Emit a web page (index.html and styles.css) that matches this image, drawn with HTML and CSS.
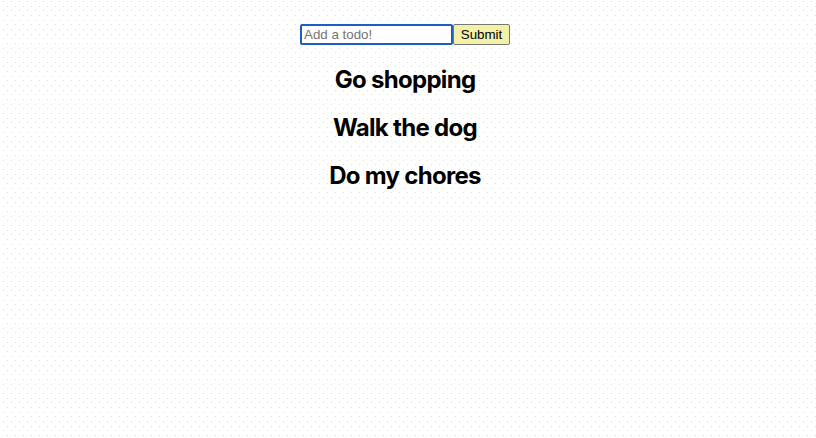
FILE: index.html
```html
<!DOCTYPE html>
<html>
<head>
<meta charset="utf-8">
<link rel="stylesheet" href="styles.css">
</head>
<body>
<div class="app">
  <form class="todo-form">
    <input class="todo-input" type="text" placeholder="Add a todo!">
    <button class="todo-submit" type="button">Submit</button>
  </form>
  <h2 class="todo-item">Go shopping</h2>
  <h2 class="todo-item">Walk the dog</h2>
  <h2 class="todo-item">Do my chores</h2>
</div>
</body>
</html>
```
FILE: styles.css
```css
html, body {
  height: 100%;
}
body {
  margin: 0;
  background-color: #ffffff;
  background-image:
    radial-gradient(circle at 3.5px 1.5px, #fff200 0.8px, transparent 0.95px),
    radial-gradient(circle at 7.5px 6.5px, #fff200 0.8px, transparent 0.95px),
    radial-gradient(circle at 3.5px 10.5px, #fff200 0.8px, transparent 0.95px),
    radial-gradient(circle at 7.5px 15.5px, #fff200 0.8px, transparent 0.95px),
    radial-gradient(circle at 3.5px 20.5px, #fff200 0.8px, transparent 0.95px),
    radial-gradient(circle at 7.5px 24.5px, #fff200 0.8px, transparent 0.95px);
  background-size: 8px 28px;
}
.app {
  width: 810px;
  padding-top: 24px;
  text-align: center;
  font-family: Inter, "Liberation Sans", sans-serif;
}
.todo-form {
  display: flex;
  justify-content: center;
  height: 21px;
}
.todo-input {
  box-sizing: border-box;
  width: 153px;
  height: 21px;
  margin: 0;
  padding: 1px 2px;
  font-family: "Liberation Sans", Arial, sans-serif;
  font-size: 13.33px;
  color: #000;
  background: #fff;
  border: 2px solid #1a5fc8;
  border-radius: 2px;
  outline: none;
}
.todo-input::placeholder {
  color: #757575;
}
.todo-submit {
  box-sizing: border-box;
  width: 57px;
  height: 21px;
  margin: 0;
  padding: 1px 6px;
  font-family: "Liberation Sans", Arial, sans-serif;
  font-size: 13.33px;
  color: #000;
  background: #f3f0a8;
  border: 1px solid #767676;
  border-radius: 2px;
}
.todo-item {
  margin: 20px 0 0;
  font-size: 24px;
  line-height: 29px;
  font-weight: 700;
  letter-spacing: -0.7px;
  color: #000;
}
.todo-item + .todo-item {
  margin-top: 19px;
}
```
